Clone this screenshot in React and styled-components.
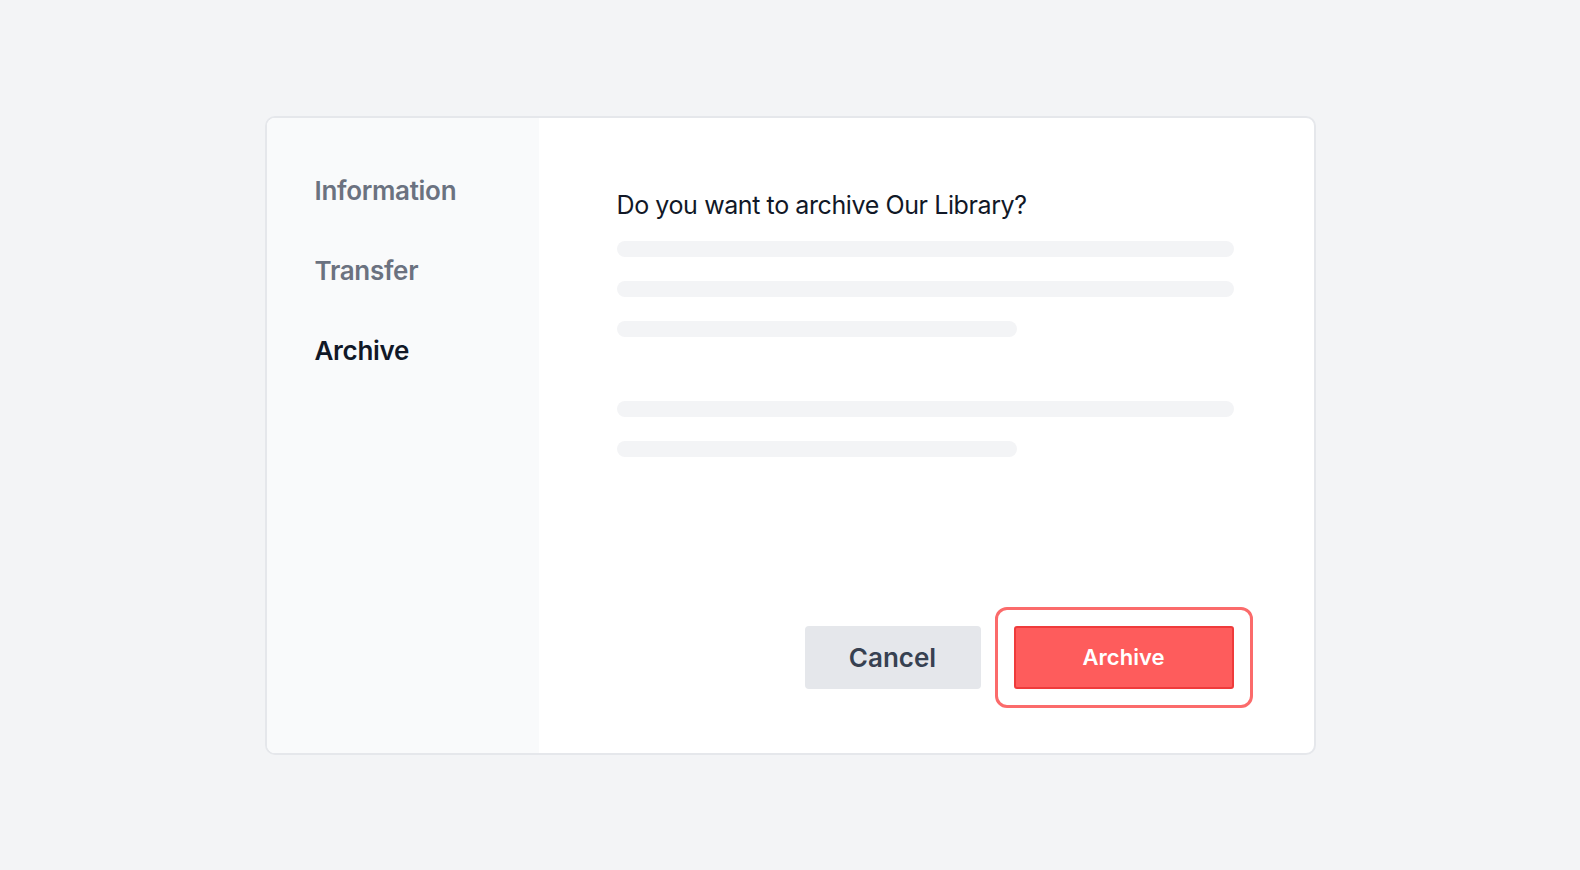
import React, { useState } from "react";
import styled, { createGlobalStyle } from "styled-components";

const GlobalStyle = createGlobalStyle`
  * { box-sizing: border-box; }
  html, body {
    margin: 0;
    padding: 0;
    background: #f3f4f6;
    font-family: Inter, "Noto Sans", "Liberation Sans", sans-serif;
  }
`;

const Page = styled.div`
  width: 100vw;
  height: 100vh;
  display: flex;
  align-items: center;
  justify-content: center;
`;

const Card = styled.div`
  width: 1051px;
  height: 639px;
  display: flex;
  background: #ffffff;
  border: 2px solid #e5e7eb;
  border-radius: 10px;
  overflow: hidden;
`;

const Sidebar = styled.nav`
  width: 272px;
  flex-shrink: 0;
  background: #f9fafb;
  padding: 53px 48px;
  display: flex;
  flex-direction: column;
  gap: 40px;
`;

const NavItem = styled.div`
  height: 40px;
  line-height: 40px;
  font-size: 26px;
  font-weight: 600;
  letter-spacing: -0.3px;
  color: ${(p) => (p.$active ? "#111827" : "#6b7280")};
  cursor: pointer;
`;

const Main = styled.section`
  flex: 1;
  display: flex;
  flex-direction: column;
  padding: 68px 80px 45px 78px;
`;

const Heading = styled.h2`
  margin: 0 0 16px 0;
  font-size: 25px;
  line-height: 39px;
  font-weight: 400;
  letter-spacing: -0.4px;
  color: #111827;
`;

const Lines = styled.div`
  display: flex;
  flex-direction: column;
  gap: 24px;
  margin-bottom: ${(p) => p.$spaced ? "64px" : "0"};
`;

const Line = styled.div`
  height: 16px;
  border-radius: 8px;
  background: #f3f4f6;
  width: ${(p) => p.$short ? "400px" : "100%"};
`;

const Actions = styled.div`
  margin-top: auto;
  margin-right: -19px;
  display: flex;
  align-items: center;
  justify-content: flex-end;
  gap: 14px;
`;

const CancelButton = styled.button`
  width: 176px;
  height: 63px;
  border: none;
  border-radius: 4px;
  background: #e5e7eb;
  color: #374151;
  font-family: inherit;
  font-size: 26px;
  font-weight: 600;
  cursor: pointer;
`;

const FocusRing = styled.div`
  padding: 16px;
  border: 3px solid #fb6b6b;
  border-radius: 12px;
  display: flex;
`;

const DangerButton = styled.button`
  width: 220px;
  height: 63px;
  border: 2px solid #ef3b3b;
  border-radius: 3px;
  background: #fe5c5c;
  color: #ffffff;
  font-family: inherit;
  font-size: 22px;
  font-weight: 600;
  cursor: pointer;
`;

const sections = ["Information", "Transfer", "Archive"];

export default function App() {
  const [active, setActive] = useState("Archive");

  return (
    <>
      <GlobalStyle />
      <Page>
        <Card>
          <Sidebar>
            {sections.map((s) => (
              <NavItem key={s} $active={active === s} onClick={() => setActive(s)}>
                {s}
              </NavItem>
            ))}
          </Sidebar>
          <Main>
            <Heading>Do you want to archive Our Library?</Heading>
            <Lines $spaced>
              <Line />
              <Line />
              <Line $short />
            </Lines>
            <Lines>
              <Line />
              <Line $short />
            </Lines>
            <Actions>
              <CancelButton>Cancel</CancelButton>
              <FocusRing>
                <DangerButton>Archive</DangerButton>
              </FocusRing>
            </Actions>
          </Main>
        </Card>
      </Page>
    </>
  );
}
